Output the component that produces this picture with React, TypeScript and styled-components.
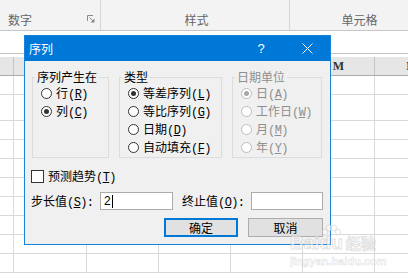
import React from "react";
import styled, { createGlobalStyle } from "styled-components";

const GlobalStyle = createGlobalStyle`
  html, body {
    margin: 0;
    padding: 0;
    background: #fff;
  }
  body {
    font-family: "Noto Sans CJK SC", "Noto Sans", sans-serif;
    font-size: 12px;
    color: #000;
  }
`;

const Screen = styled.div`
  position: relative;
  width: 408px;
  height: 279px;
  overflow: hidden;
  background: #fff;
`;

const Ribbon = styled.div`
  display: flex;
  height: 30px;
  background: #f3f3f3;
  border-bottom: 1px solid #c6c6c6;
`;

const RibbonGroup = styled.div<{ $w: number; $align: string }>`
  flex: 0 0 ${p => p.$w}px;
  box-sizing: border-box;
  display: flex;
  align-items: flex-end;
  justify-content: ${p => p.$align};
  padding: 0 5px 2px 8px;
  border-right: 1px solid #d6d6d6;
`;

const RibbonLabel = styled.span`
  line-height: 16px;
  color: #666;
`;

const Launcher = styled.svg`
  margin-bottom: 5px;
`;

const FormulaBar = styled.div`
  height: 22px;
  border-bottom: 1px solid #c6c6c6;
  margin-bottom: 3px;
`;

const Row = styled.div<{ $h: number; $head?: boolean }>`
  display: flex;
  height: ${p => p.$h}px;
  box-sizing: border-box;
  border-bottom: 1px solid ${p => (p.$head ? "#ababab" : "#d9d9d9")};
  background: ${p => (p.$head ? "#e6e6e6" : "#fff")};
`;

const Cell = styled.div<{ $w: number; $head?: boolean }>`
  flex: 0 0 ${p => p.$w}px;
  box-sizing: border-box;
  border-right: 1px solid ${p => (p.$head ? "#c4c4c4" : "#d9d9d9")};
  display: flex;
  align-items: center;
  justify-content: center;
  font-family: "Liberation Serif", serif;
  font-weight: bold;
  font-size: 12px;
  color: #333;
`;

const Dialog = styled.div`
  position: absolute;
  left: 24px;
  top: 35px;
  width: 307px;
  height: 210px;
  box-sizing: border-box;
  border: 1px solid #1883d7;
  background: #f0f0f0;
  display: flex;
  flex-direction: column;
`;

const TitleBar = styled.div`
  flex: 0 0 25px;
  display: flex;
  align-items: center;
  padding-left: 4px;
  background: #0078d7;
  color: #fff;
`;

const Title = styled.span`
  font-size: 12px;
  line-height: 16px;
`;

const TitleButton = styled.div`
  width: 46px;
  height: 25px;
  display: flex;
  align-items: center;
  justify-content: center;
  font-family: "Liberation Sans", sans-serif;
  font-size: 13px;
  color: #fff;
  &:first-of-type {
    margin-left: auto;
  }
`;

const Body = styled.div`
  flex: 1;
  display: flex;
  flex-direction: column;
  padding: 9px 8px 8px 6px;
`;

const Groups = styled.div`
  display: flex;
  gap: 10px;
  padding-left: 1px;
`;

const Group = styled.fieldset<{ $w: number; $disabled?: boolean }>`
  flex: 0 0 ${p => p.$w}px;
  box-sizing: border-box;
  margin: 0;
  min-width: 0;
  height: 88px;
  padding: 0 0 0 8px;
  border: 1px solid #dcdcdc;
  color: ${p => (p.$disabled ? "#8f8f8f" : "#000")};
`;

const Legend = styled.legend`
  margin-left: -6px;
  padding: 0 2px;
  font-size: 12px;
  line-height: 14px;
`;

const Option = styled.div`
  display: flex;
  align-items: center;
  gap: 4px;
  height: 18px;
  white-space: nowrap;
`;

const Radio = styled.span<{ $on?: boolean; $disabled?: boolean }>`
  flex: 0 0 11px;
  height: 11px;
  box-sizing: border-box;
  border-radius: 50%;
  border: 1px solid ${p => (p.$disabled ? "#bcbcbc" : "#333")};
  background: #fff;
  display: flex;
  align-items: center;
  justify-content: center;
  &::after {
    content: "";
    display: ${p => (p.$on ? "block" : "none")};
    width: 5px;
    height: 5px;
    border-radius: 50%;
    background: ${p => (p.$disabled ? "#a8a8a8" : "#333")};
  }
`;

const Key = styled.span`
  font-family: "Liberation Mono", monospace;
  font-size: 12px;
  letter-spacing: -0.6px;
  u {
    text-underline-offset: 1px;
  }
`;

const CheckRow = styled.div`
  display: flex;
  align-items: center;
  gap: 4px;
  height: 18px;
  margin-top: 9px;
`;

const CheckBox = styled.span`
  width: 13px;
  height: 13px;
  box-sizing: border-box;
  border: 1px solid #333;
  background: #fff;
`;

const FieldRow = styled.div`
  display: grid;
  grid-template-columns: 69px 73px 78px 72px;
  align-items: center;
  height: 18px;
  margin-top: 7px;
`;

const FieldLabel = styled.span<{ $indent?: number }>`
  padding-left: ${p => p.$indent ?? 0}px;
  white-space: nowrap;
`;

const TextBox = styled.div`
  height: 18px;
  box-sizing: border-box;
  border: 1px solid #ababab;
  background: #fff;
  display: flex;
  align-items: center;
  padding-left: 3px;
  font-family: "Liberation Sans", sans-serif;
  font-size: 12px;
`;

const Caret = styled.span`
  width: 1px;
  height: 13px;
  margin-left: 1px;
  background: #000;
`;

const Buttons = styled.div`
  display: flex;
  justify-content: flex-end;
  gap: 10px;
  margin-top: 8px;
  margin-right: -1px;
`;

const Button = styled.div<{ $primary?: boolean; $w: number }>`
  width: ${p => p.$w}px;
  height: 19px;
  box-sizing: border-box;
  border: ${p => (p.$primary ? "2px solid #0078d7" : "1px solid #adadad")};
  background: #e1e1e1;
  display: flex;
  align-items: center;
  justify-content: center;
  line-height: 14px;
`;

const Watermark = styled.div`
  position: absolute;
  left: 290px;
  top: 224px;
  width: 92px;
  pointer-events: none;
`;

const WmLogo = styled.div`
  position: relative;
  display: flex;
  align-items: flex-end;
  height: 30px;
  font-family: "Liberation Sans", sans-serif;
  font-weight: bold;
  font-size: 19px;
  color: rgba(255, 255, 255, 0.55);
  -webkit-text-stroke: 1px rgba(190, 190, 190, 0.45);
`;

const WmCn = styled.span`
  margin-left: 3px;
  font-family: "Noto Sans CJK SC", sans-serif;
  font-size: 15px;
  line-height: 22px;
`;

const Paw = styled.svg`
  position: absolute;
  left: 31px;
  top: 0;
`;

const WmUrl = styled.div`
  margin-top: 1px;
  font-family: "Liberation Sans", sans-serif;
  font-weight: bold;
  font-size: 11px;
  line-height: 13px;
  color: rgba(255, 255, 255, 0.5);
  -webkit-text-stroke: 0.6px rgba(190, 190, 190, 0.45);
`;

const columns = [
  { w: 14, name: "" },
  { w: 73, name: "I" },
  { w: 72, name: "J" },
  { w: 72, name: "K" },
  { w: 72, name: "L" },
  { w: 72, name: "M" },
  { w: 72, name: "N" }
];

const rowHeights = [19, 26, 19, 19, 19, 19, 19, 19, 19, 19];

const RadioOption: React.FC<{ label: string; k: string; on?: boolean; disabled?: boolean }> = ({
  label,
  k,
  on,
  disabled
}) => (
  <Option>
    <Radio $on={on} $disabled={disabled} />
    <span>
      {label}
      <Key>
        (<u>{k}</u>)
      </Key>
    </span>
  </Option>
);

export default function App() {
  return (
    <Screen>
      <GlobalStyle />
      <Ribbon>
        <RibbonGroup $w={101} $align="space-between">
          <RibbonLabel>数字</RibbonLabel>
          <Launcher width="8" height="8" viewBox="0 0 8 8">
            <path d="M0.5 6V0.5H6" fill="none" stroke="#8a8a8a" strokeWidth="1" />
            <path d="M2.5 2.5L6 6" fill="none" stroke="#8a8a8a" strokeWidth="1" />
            <path d="M7.5 3.5V7.5H3.5Z" fill="#8a8a8a" />
          </Launcher>
        </RibbonGroup>
        <RibbonGroup $w={189} $align="center">
          <RibbonLabel>样式</RibbonLabel>
        </RibbonGroup>
        <RibbonGroup $w={137} $align="center">
          <RibbonLabel>单元格</RibbonLabel>
        </RibbonGroup>
      </Ribbon>
      <FormulaBar />
      <Row $h={19} $head>
        {columns.map((c, i) => (
          <Cell key={i} $w={c.w} $head>
            {c.name}
          </Cell>
        ))}
      </Row>
      {rowHeights.map((h, r) => (
        <Row key={r} $h={h}>
          {columns.map((c, i) => (
            <Cell key={i} $w={c.w} />
          ))}
        </Row>
      ))}

      <Dialog>
        <TitleBar>
          <Title>序列</Title>
          <TitleButton>?</TitleButton>
          <TitleButton>
            <svg width="11" height="11" viewBox="0 0 11 11">
              <path d="M0.5 0.5L10.5 10.5M10.5 0.5L0.5 10.5" stroke="#fff" strokeWidth="1" />
            </svg>
          </TitleButton>
        </TitleBar>
        <Body>
          <Groups>
            <Group $w={77}>
              <Legend>序列产生在</Legend>
              <RadioOption label="行" k="R" />
              <RadioOption label="列" k="C" on />
            </Group>
            <Group $w={103}>
              <Legend>类型</Legend>
              <RadioOption label="等差序列" k="L" on />
              <RadioOption label="等比序列" k="G" />
              <RadioOption label="日期" k="D" />
              <RadioOption label="自动填充" k="F" />
            </Group>
            <Group $w={90} $disabled>
              <Legend>日期单位</Legend>
              <RadioOption label="日" k="A" on disabled />
              <RadioOption label="工作日" k="W" disabled />
              <RadioOption label="月" k="M" disabled />
              <RadioOption label="年" k="Y" disabled />
            </Group>
          </Groups>

          <CheckRow>
            <CheckBox />
            <span>
              预测趋势
              <Key>
                (<u>T</u>)
              </Key>
            </span>
          </CheckRow>

          <FieldRow>
            <FieldLabel>
              步长值
              <Key>
                (<u>S</u>):
              </Key>
            </FieldLabel>
            <TextBox>
              2<Caret />
            </TextBox>
            <FieldLabel $indent={9}>
              终止值
              <Key>
                (<u>O</u>):
              </Key>
            </FieldLabel>
            <TextBox />
          </FieldRow>

          <Buttons>
            <Button $primary $w={74}>
              确定
            </Button>
            <Button $w={75}>取消</Button>
          </Buttons>
        </Body>
      </Dialog>

      <Watermark>
        <WmLogo>
          <span>Baidu</span>
          <WmCn>经验</WmCn>
          <Paw width="20" height="18" viewBox="0 0 20 18">
            <g fill="rgba(255,255,255,0.55)" stroke="rgba(190,190,190,0.45)" strokeWidth="1">
              <ellipse cx="4" cy="8" rx="2.5" ry="3" />
              <ellipse cx="8" cy="4" rx="2.5" ry="3" />
              <ellipse cx="13" cy="4" rx="2.5" ry="3" />
              <ellipse cx="17" cy="8" rx="2.5" ry="3" />
            </g>
          </Paw>
        </WmLogo>
        <WmUrl>jingyan.baidu.com</WmUrl>
      </Watermark>
    </Screen>
  );
}
